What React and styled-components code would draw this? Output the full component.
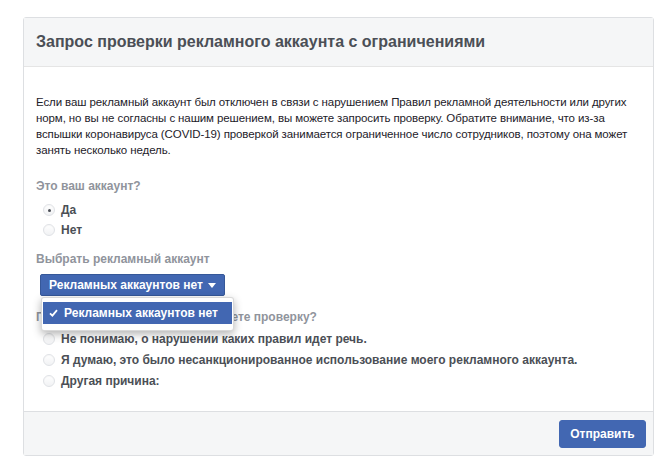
import React from 'react';
import styled, { createGlobalStyle } from 'styled-components';

const GlobalStyle = createGlobalStyle`
  *, *::before, *::after {
    box-sizing: border-box;
  }
  body {
    margin: 0;
    background: #fff;
    font-family: "Liberation Sans", Arial, sans-serif;
  }
`;

const Page = styled.div`
  padding: 17px 9px 8px 23px;
`;

const Dialog = styled.div`
  width: 631px;
  border: 1px solid #dddfe2;
  border-radius: 3px;
  background: #fff;
  display: flex;
  flex-direction: column;
`;

const Header = styled.div`
  height: 49px;
  display: flex;
  align-items: center;
  padding: 0 12px;
  background: #f5f6f7;
  border-bottom: 1px solid #e5e5e5;
`;

const Title = styled.h2`
  margin: 0;
  font-size: 16px;
  font-weight: bold;
  color: #4b4f56;
`;

const Body = styled.div`
  height: 344px;
  padding: 27px 12px 0;
  display: flex;
  flex-direction: column;
`;

const Intro = styled.p`
  margin: 0;
  width: 600px;
  font-size: 11.5px;
  line-height: 16px;
  letter-spacing: -0.1px;
  color: #1d2129;
`;

const Label = styled.div`
  margin-top: ${p => p.$top}px;
  font-size: 12px;
  line-height: 16px;
  font-weight: bold;
  color: #90949c;
`;

const RadioList = styled.div`
  margin-top: ${p => p.$top}px;
  display: flex;
  flex-direction: column;
  gap: ${p => p.$gap}px;
`;

const Option = styled.label`
  display: flex;
  align-items: center;
  gap: 6px;
  padding-left: 7px;
  font-size: 12px;
  line-height: 16px;
  font-weight: bold;
  color: #4b4f56;
`;

const Circle = styled.span`
  width: 12px;
  height: 12px;
  border-radius: 50%;
  border: 1px solid #e0e2e6;
  background: linear-gradient(#fff, #f1f2f4);
  box-shadow: inset 0 1px 1px rgba(0, 0, 0, 0.03);
  display: flex;
  align-items: center;
  justify-content: center;

  &::after {
    content: '';
    width: 3px;
    height: 3px;
    border-radius: 50%;
    background: ${p => (p.$checked ? '#4b4f56' : 'transparent')};
  }
`;

const SelectWrap = styled.div`
  position: relative;
  margin-top: 7px;
  margin-left: 4px;
  align-self: flex-start;
`;

const SelectButton = styled.button`
  height: 22px;
  padding: 0 8px;
  border: 1px solid #365899;
  border-radius: 2px;
  background: #4267b2;
  color: #fff;
  font-family: inherit;
  font-size: 12px;
  font-weight: bold;
  display: flex;
  align-items: center;
  gap: 5px;
`;

const Caret = styled.span`
  width: 0;
  height: 0;
  border-left: 4px solid transparent;
  border-right: 4px solid transparent;
  border-top: 5px solid #fff;
`;

const Menu = styled.div`
  position: absolute;
  left: 1px;
  top: 23px;
  width: 193px;
  padding: 4px 1px 6px;
  background: #fff;
  border: 1px solid rgba(0, 0, 0, 0.15);
  border-radius: 3px;
  box-shadow: 0 3px 8px rgba(0, 0, 0, 0.3);
  z-index: 2;
`;

const MenuItem = styled.div`
  height: 22px;
  display: flex;
  align-items: center;
  gap: 6px;
  padding-left: 6px;
  background: #4267b2;
  color: #fff;
  font-size: 12px;
  font-weight: bold;
`;

const Footer = styled.div`
  height: 44px;
  display: flex;
  align-items: center;
  justify-content: flex-end;
  padding: 1px 7px 0 12px;
  background: #f5f6f7;
  border-top: 1px solid #dddfe2;
`;

const SubmitButton = styled.button`
  width: 87px;
  height: 28px;
  border: 1px solid #4267b2;
  border-radius: 3px;
  background: #4267b2;
  color: #fff;
  font-family: inherit;
  font-size: 12px;
  font-weight: bold;
`;

const Radio = ({ checked, children }) => (
  <Option>
    <Circle $checked={checked} />
    {children}
  </Option>
);

export default function App() {
  return (
    <>
      <GlobalStyle />
      <Page>
        <Dialog>
          <Header>
            <Title>Запрос проверки рекламного аккаунта с ограничениями</Title>
          </Header>
          <Body>
            <Intro>
              Если ваш рекламный аккаунт был отключен в связи с нарушением Правил рекламной деятельности или других
              норм, но вы не согласны с нашим решением, вы можете запросить проверку. Обратите внимание, что из-за
              вспышки коронавируса (COVID-19) проверкой занимается ограниченное число сотрудников, поэтому она может
              занять несколько недель.
            </Intro>
            <Label $top={20}>Это ваш аккаунт?</Label>
            <RadioList $top={8} $gap={4}>
              <Radio checked>Да</Radio>
              <Radio>Нет</Radio>
            </RadioList>
            <Label $top={13}>Выбрать рекламный аккаунт</Label>
            <SelectWrap>
              <SelectButton>
                Рекламных аккаунтов нет
                <Caret />
              </SelectButton>
              <Menu>
                <MenuItem>
                  <svg width="9" height="8" viewBox="0 0 9 8">
                    <path d="M1 4.3 L3.4 6.6 L8 1.2" fill="none" stroke="#fff" strokeWidth="1.8" />
                  </svg>
                  Рекламных аккаунтов нет
                </MenuItem>
              </Menu>
            </SelectWrap>
            <Label $top={13}>По какой причине вы запрашиваете проверку?</Label>
            <RadioList $top={6} $gap={5}>
              <Radio>Не понимаю, о нарушении каких правил идет речь.</Radio>
              <Radio>Я думаю, это было несанкционированное использование моего рекламного аккаунта.</Radio>
              <Radio>Другая причина:</Radio>
            </RadioList>
          </Body>
          <Footer>
            <SubmitButton>Отправить</SubmitButton>
          </Footer>
        </Dialog>
      </Page>
    </>
  );
}
